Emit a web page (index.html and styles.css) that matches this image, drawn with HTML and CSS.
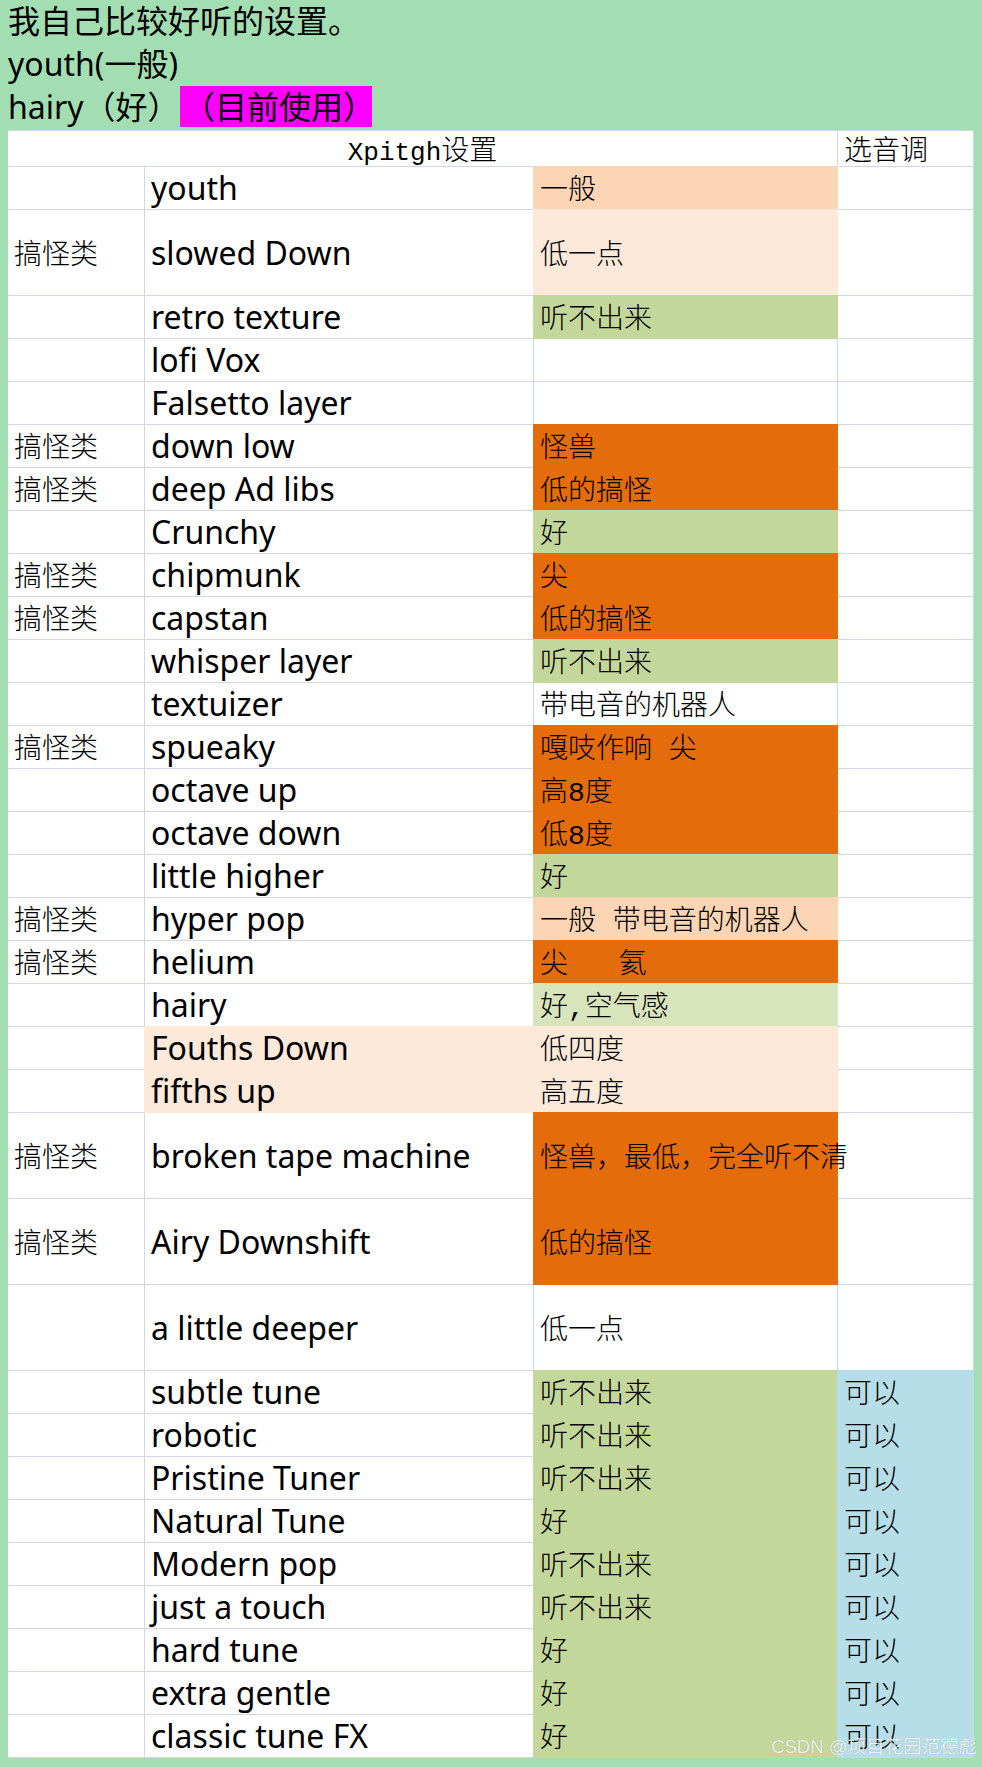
FILE: index.html
```html
<!DOCTYPE html>
<html lang="zh">
<head>
<meta charset="utf-8">
<title>Xpitgh设置</title>
<link rel="stylesheet" href="styles.css">
</head>
<body>
<div class="notes">
  <div class="line">我自己比较好听的设置。</div>
  <div class="line">youth(一般)</div>
  <div class="line line-last"><span class="cell-a">hairy（好）</span><span class="hl">（目前使用）</span></div>
</div>
<table class="sheet">
  <colgroup><col class="c1"><col class="c2"><col class="c3"><col class="c4"></colgroup>
  <tr class="head"><td colspan="3" class="title"><span class="mono">Xpitgh</span>设置</td><td class="song">选音调</td></tr>
  <tr><td class="song"></td><td class="name">youth</td><td class="song f-peach">一般</td><td class="song"></td></tr>
  <tr class="tall"><td class="song">搞怪类</td><td class="name">slowed Down</td><td class="song f-pale">低一点</td><td class="song"></td></tr>
  <tr><td class="song"></td><td class="name">retro texture</td><td class="song f-green">听不出来</td><td class="song"></td></tr>
  <tr><td class="song"></td><td class="name">lofi Vox</td><td class="song"></td><td class="song"></td></tr>
  <tr><td class="song"></td><td class="name">Falsetto layer</td><td class="song"></td><td class="song"></td></tr>
  <tr><td class="song">搞怪类</td><td class="name">down low</td><td class="song f-orange">怪兽</td><td class="song"></td></tr>
  <tr><td class="song">搞怪类</td><td class="name">deep Ad libs</td><td class="song f-orange">低的搞怪</td><td class="song"></td></tr>
  <tr><td class="song"></td><td class="name">Crunchy</td><td class="song f-green">好</td><td class="song"></td></tr>
  <tr><td class="song">搞怪类</td><td class="name">chipmunk</td><td class="song f-orange">尖</td><td class="song"></td></tr>
  <tr><td class="song">搞怪类</td><td class="name">capstan</td><td class="song f-orange">低的搞怪</td><td class="song"></td></tr>
  <tr><td class="song"></td><td class="name">whisper layer</td><td class="song f-green">听不出来</td><td class="song"></td></tr>
  <tr><td class="song"></td><td class="name">textuizer</td><td class="song">带电音的机器人</td><td class="song"></td></tr>
  <tr><td class="song">搞怪类</td><td class="name">spueaky</td><td class="song f-orange">嘎吱作响 尖</td><td class="song"></td></tr>
  <tr><td class="song"></td><td class="name">octave up</td><td class="song f-orange">高8度</td><td class="song"></td></tr>
  <tr><td class="song"></td><td class="name">octave down</td><td class="song f-orange">低8度</td><td class="song"></td></tr>
  <tr><td class="song"></td><td class="name">little higher</td><td class="song f-green">好</td><td class="song"></td></tr>
  <tr><td class="song">搞怪类</td><td class="name">hyper pop</td><td class="song f-peach">一般 带电音的机器人</td><td class="song"></td></tr>
  <tr><td class="song">搞怪类</td><td class="name">helium</td><td class="song f-orange">尖   氦</td><td class="song"></td></tr>
  <tr><td class="song"></td><td class="name">hairy</td><td class="song f-lgreen">好,空气感</td><td class="song"></td></tr>
  <tr><td class="song"></td><td class="name f-pale">Fouths Down</td><td class="song f-pale">低四度</td><td class="song"></td></tr>
  <tr><td class="song"></td><td class="name f-pale">fifths up</td><td class="song f-pale">高五度</td><td class="song"></td></tr>
  <tr class="tall"><td class="song">搞怪类</td><td class="name">broken tape machine</td><td class="song f-orange">怪兽，最低，完全听不清</td><td class="song"></td></tr>
  <tr class="tall"><td class="song">搞怪类</td><td class="name">Airy Downshift</td><td class="song f-orange">低的搞怪</td><td class="song"></td></tr>
  <tr class="tall"><td class="song"></td><td class="name">a little deeper</td><td class="song">低一点</td><td class="song"></td></tr>
  <tr><td class="song"></td><td class="name">subtle tune</td><td class="song f-green">听不出来</td><td class="song f-blue">可以</td></tr>
  <tr><td class="song"></td><td class="name">robotic</td><td class="song f-green">听不出来</td><td class="song f-blue">可以</td></tr>
  <tr><td class="song"></td><td class="name">Pristine Tuner</td><td class="song f-green">听不出来</td><td class="song f-blue">可以</td></tr>
  <tr><td class="song"></td><td class="name">Natural Tune</td><td class="song f-green">好</td><td class="song f-blue">可以</td></tr>
  <tr><td class="song"></td><td class="name">Modern pop</td><td class="song f-green">听不出来</td><td class="song f-blue">可以</td></tr>
  <tr><td class="song"></td><td class="name">just a touch</td><td class="song f-green">听不出来</td><td class="song f-blue">可以</td></tr>
  <tr><td class="song"></td><td class="name">hard tune</td><td class="song f-green">好</td><td class="song f-blue">可以</td></tr>
  <tr><td class="song"></td><td class="name">extra gentle</td><td class="song f-green">好</td><td class="song f-blue">可以</td></tr>
  <tr><td class="song"></td><td class="name">classic tune FX</td><td class="song f-green">好</td><td class="song f-blue">可以</td></tr>
</table>
<div class="watermark">CSDN @项目花园范德彪</div>
</body>
</html>
```
FILE: styles.css
```css
html, body {
  margin: 0;
}
body {
  position: relative;
  background: #a3deb2;
  padding: 0 9px 9px 8px;
  color: #000;
  font-family: "Noto Sans", "Noto Sans CJK SC", sans-serif;
}
.notes {
  font-size: 32px;
}
.line {
  height: 43px;
  line-height: 42px;
  white-space: nowrap;
}
.line-last {
  height: 44px;
  display: flex;
  align-items: flex-start;
}
.cell-a {
  width: 172px;
  flex: none;
}
.hl {
  display: block;
  flex: none;
  background: #ff00ff;
  width: 189px;
  height: 41px;
  padding-left: 3px;
  line-height: 42px;
  overflow: visible;
}
.sheet {
  border-collapse: separate;
  border-spacing: 0;
  table-layout: fixed;
  width: 966px;
  background: #fff;
  border-top: 1px solid #d0d7e5;
}
.c1 { width: 137px; }
.c2 { width: 389px; }
.c3 { width: 304px; }
.c4 { width: 136px; }
.sheet tr { height: 43px; }
.sheet tr.head { height: 36px; }
.sheet tr.tall { height: 86px; }
.sheet td {
  border-right: 1px solid #d0d7e5;
  border-bottom: 1px solid #d0d7e5;
  padding: 0 0 0 6px;
  white-space: pre;
  overflow: visible;
  vertical-align: middle;
  background: #fff;
}
.sheet .name {
  font-family: "Noto Sans", sans-serif;
  font-size: 32px;
  line-height: 40px;
  padding-left: 6px;
}
.sheet .song {
  font-family: "Liberation Mono", "Noto Sans CJK SC", monospace;
  font-size: 28px;
  font-weight: 300;
  line-height: 34px;
  padding-top: 8px;
}
.sheet .title {
  text-align: center;
  padding: 0 0 2px 0;
  font-family: "Noto Sans CJK SC", sans-serif;
  font-size: 28px;
  font-weight: 300;
  line-height: 32px;
}
.sheet .head .song {
  line-height: 26px;
  padding-top: 9px;
}
.mono {
  font-family: "Liberation Mono", monospace;
  font-size: 26px;
  line-height: 20px;
}
.f-peach, .f-pale, .f-green, .f-orange, .f-lgreen, .f-blue {
  border-color: transparent !important;
}
.sheet .f-peach { background: #fcd5b4; box-shadow: -1px 0 0 0 #fcd5b4, 0 -1px 0 0 #fcd5b4, -1px -1px 0 0 #fcd5b4; }
.sheet .f-pale { background: #fde9d9; box-shadow: -1px 0 0 0 #fde9d9, 0 -1px 0 0 #fde9d9, -1px -1px 0 0 #fde9d9; }
.sheet .f-green { background: #c4d79b; box-shadow: -1px 0 0 0 #c4d79b, 0 -1px 0 0 #c4d79b, -1px -1px 0 0 #c4d79b; }
.sheet .f-orange { background: #e46c0a; box-shadow: -1px 0 0 0 #e46c0a, 0 -1px 0 0 #e46c0a, -1px -1px 0 0 #e46c0a; }
.sheet .f-lgreen { background: #d8e4bc; box-shadow: -1px 0 0 0 #d8e4bc, 0 -1px 0 0 #d8e4bc, -1px -1px 0 0 #d8e4bc; }
.sheet .f-blue { background: #b7dee8; box-shadow: -1px 0 0 0 #b7dee8, 0 -1px 0 0 #b7dee8, -1px -1px 0 0 #b7dee8; }
.watermark {
  position: absolute;
  right: 5px;
  bottom: 9px;
  font-family: "Liberation Sans", "Noto Sans CJK SC", sans-serif;
  font-size: 18.5px;
  line-height: 22px;
  color: rgba(255, 255, 255, 0.82);
  text-shadow: 0 0 1px rgba(0, 0, 0, 0.25);
  white-space: nowrap;
}
```
